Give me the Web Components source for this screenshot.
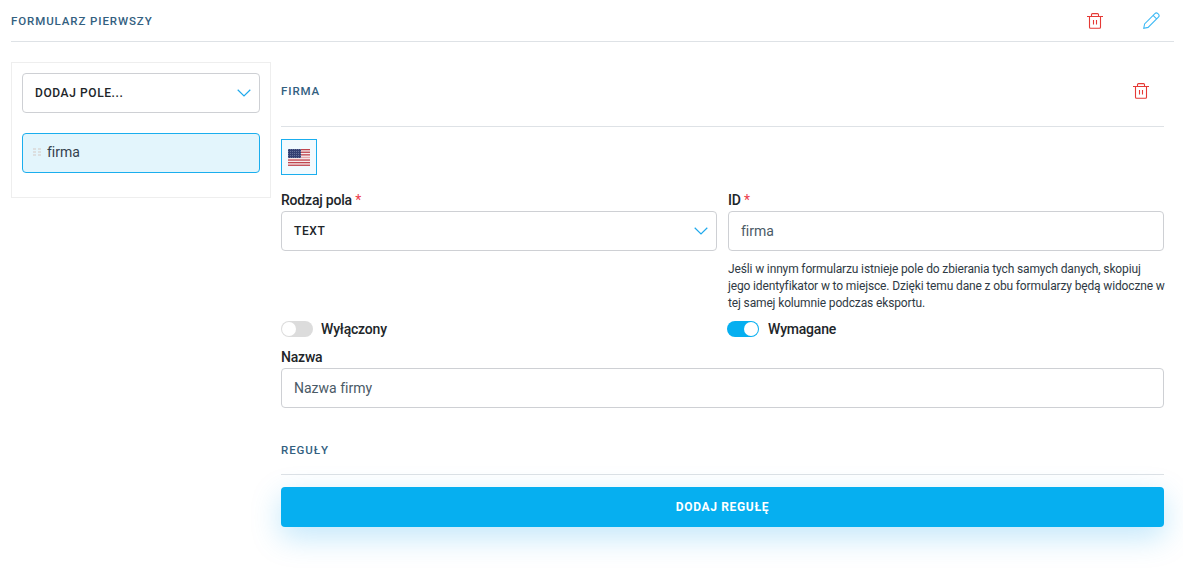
<!DOCTYPE html>
<html lang="pl">
<head>
<meta charset="utf-8">
<title>Formularz</title>
<style>
  html, body { margin: 0; background: #fff; }
  body { font-family: Roboto, "Liberation Sans", sans-serif; color: #212529; font-variant-ligatures: none; }
</style>
</head>
<body>
<form-page></form-page>

<script>
const trashIcon = `<svg width="16" height="16" viewBox="0 0 16 16" fill="none" stroke="#e53935" stroke-width="1.1">
  <path d="M0 3.5h16M2.5 3.5v10.8a1 1 0 0 0 1 1h9a1 1 0 0 0 1-1V3.5M4.5 3.5V1.6a1 1 0 0 1 1-1h5a1 1 0 0 1 1 1v1.9M6.5 7v4.5M9.5 7v4.5"/>
</svg>`;

const pencilIcon = `<svg width="17" height="17" viewBox="0 0 18 18" fill="none" stroke="#3db9f5" stroke-width="1.15">
  <path d="M.8 17.2l.9-4.6L12.6 1.7a2.2 2.2 0 0 1 3.1 0l.6.6a2.2 2.2 0 0 1 0 3.1L5.4 16.3zM10.7 3.6l3.7 3.7"/>
</svg>`;

const chevronIcon = `<svg width="14" height="8" viewBox="0 0 14 8" fill="none" stroke="#1fa9ec" stroke-width="1.2"><path d="M.7.8L7 7l6.3-6.2"/></svg>`;

// custom element FormHeading
class FormHeading extends HTMLElement {
  constructor() {
    super();
    this.attachShadow({ mode: "open" });
    this.shadowRoot.innerHTML = `
      <style>
        :host {
          display: flex;
          justify-content: space-between;
          align-items: center;
          border-bottom: 1px solid #dee2e6;
          color: #33607f;
          font-size: 11.5px;
          font-weight: 500;
          letter-spacing: .9px;
        }
        .actions { display: flex; align-items: center; gap: 10px; }
      </style>
      <span><slot></slot></span>
      <div class="actions"><slot name="actions"></slot></div>
    `;
  }
}
customElements.define("form-heading", FormHeading);

// custom element IconButton
class IconButton extends HTMLElement {
  constructor() {
    super();
    this.attachShadow({ mode: "open" });
    this.shadowRoot.innerHTML = `
      <style>
        :host { display: flex; align-items: center; justify-content: center; width: 46px; height: 40px; }
        svg { display: block; }
      </style>
      ${this.getAttribute("icon") === "pencil" ? pencilIcon : trashIcon}
    `;
  }
}
customElements.define("icon-button", IconButton);

// custom element SelectBox
class SelectBox extends HTMLElement {
  constructor() {
    super();
    this.attachShadow({ mode: "open" });
    this.shadowRoot.innerHTML = `
      <style>
        :host {
          display: flex;
          justify-content: space-between;
          align-items: center;
          box-sizing: border-box;
          height: 40px;
          padding: 0 15px 1px 12px;
          border: 1px solid #ced0d4;
          border-radius: 4px;
          background: #fff;
          color: #212529;
          font-size: 12px;
          font-weight: 500;
          letter-spacing: .6px;
        }
        svg { display: block; margin-right: -7px; }
      </style>
      <span><slot></slot></span>
      ${chevronIcon}
    `;
  }
}
customElements.define("select-box", SelectBox);

// custom element FieldItem
class FieldItem extends HTMLElement {
  constructor() {
    super();
    this.attachShadow({ mode: "open" });
    this.shadowRoot.innerHTML = `
      <style>
        :host {
          display: flex;
          align-items: center;
          gap: 6px;
          box-sizing: border-box;
          height: 40px;
          padding: 0 10px 2px;
          border: 1px solid #1aaeee;
          border-radius: 4px;
          background: #e3f5fc;
          color: #33404d;
          font-size: 14px;
        }
        .grip {
          display: grid;
          grid-template-columns: 3px 3px;
          gap: 1px 2px;
        }
        .grip i { width: 3px; height: 2px; background: #dcdfe0; }
      </style>
      <span class="grip"><i></i><i></i><i></i><i></i><i></i><i></i></span>
      <span><slot></slot></span>
    `;
  }
}
customElements.define("field-item", FieldItem);

// custom element FieldSidebar
class FieldSidebar extends HTMLElement {
  constructor() {
    super();
    this.attachShadow({ mode: "open" });
    this.shadowRoot.innerHTML = `
      <style>
        :host {
          display: flex;
          flex-direction: column;
          gap: 20px;
          box-sizing: border-box;
          width: 260px;
          height: 136px;
          padding: 10px;
          border: 1px solid #eeeeee;
        }
      </style>
      <slot></slot>
    `;
  }
}
customElements.define("field-sidebar", FieldSidebar);

// custom element FlagTab
class FlagTab extends HTMLElement {
  constructor() {
    super();
    this.attachShadow({ mode: "open" });
    let stripes = "";
    for (let i = 0; i < 7; i++) {
      stripes += `<rect x="0" y="${i * 2.6}" width="22" height="1.3" fill="${i === 3 ? "#e6a9ae" : "#c0454f"}"/>`;
    }
    this.shadowRoot.innerHTML = `
      <style>
        :host {
          display: flex;
          align-items: center;
          justify-content: center;
          box-sizing: border-box;
          width: 36px;
          height: 36px;
          border: 1px solid #1aaeee;
          background: #f2fafe;
        }
        svg { display: block; }
      </style>
      <svg width="22" height="17" viewBox="0 0 22 17">
        <defs>
          <pattern id="stars" width="2" height="2" patternUnits="userSpaceOnUse">
            <rect width="2" height="2" fill="#333f72"/>
            <rect width="1" height="1" fill="#65709a"/>
          </pattern>
        </defs>
        <rect width="22" height="17" fill="#f6eeee"/>
        ${stripes}
        <rect width="13" height="9" fill="url(#stars)"/>
      </svg>
    `;
  }
}
customElements.define("flag-tab", FlagTab);

// custom element FormField
class FormField extends HTMLElement {
  constructor() {
    super();
    this.attachShadow({ mode: "open" });
    const required = this.hasAttribute("required");
    this.shadowRoot.innerHTML = `
      <style>
        :host { display: block; }
        label {
          display: block;
          height: 21px;
          line-height: 20px;
          color: #212529;
          font-size: 14px;
          font-weight: 500;
          letter-spacing: -.2px;
        }
        .star { color: #ec3d4c; font-weight: 400; }
      </style>
      <label>${this.getAttribute("label")}${required ? ' <span class="star">*</span>' : ""}</label>
      <slot></slot>
    `;
  }
}
customElements.define("form-field", FormField);

// custom element TextBox
class TextBox extends HTMLElement {
  constructor() {
    super();
    this.attachShadow({ mode: "open" });
    this.shadowRoot.innerHTML = `
      <style>
        :host {
          display: flex;
          align-items: center;
          box-sizing: border-box;
          height: 40px;
          padding: 0 12px;
          border: 1px solid #ced0d4;
          border-radius: 4px;
          color: #4a5a66;
          font-size: 14px;
          background: #fff;
        }
      </style>
      <slot></slot>
    `;
  }
}
customElements.define("text-box", TextBox);

// custom element ToggleSwitch
class ToggleSwitch extends HTMLElement {
  constructor() {
    super();
    this.attachShadow({ mode: "open" });
    this.shadowRoot.innerHTML = `
      <style>
        :host {
          display: flex;
          align-items: center;
          gap: 8px;
          height: 18px;
          color: #212529;
          font-size: 14px;
          font-weight: 500;
          letter-spacing: -.2px;
        }
        :host([on]) { gap: 9px; }
        .track {
          display: flex;
          align-items: center;
          box-sizing: border-box;
          width: 32px;
          height: 16px;
          padding: 1px;
          border-radius: 8px;
          background: #dcdcdc;
        }
        .knob { width: 14px; height: 14px; border-radius: 50%; background: #fff; }
        :host([on]) .track { background: #06aff0; justify-content: flex-end; }
      </style>
      <span class="track"><span class="knob"></span></span>
      <span><slot></slot></span>
    `;
  }
}
customElements.define("toggle-switch", ToggleSwitch);

// custom element PrimaryButton
class PrimaryButton extends HTMLElement {
  constructor() {
    super();
    this.attachShadow({ mode: "open" });
    this.shadowRoot.innerHTML = `
      <style>
        :host {
          display: flex;
          align-items: center;
          justify-content: center;
          height: 40px;
          border-radius: 4px;
          background: #06aff0;
          box-shadow: 0 10px 30px rgba(6, 160, 240, .25);
          color: #fff;
          font-size: 12px;
          font-weight: 700;
          letter-spacing: .65px;
        }
      </style>
      <slot></slot>
    `;
  }
}
customElements.define("primary-button", PrimaryButton);

// custom element FormPage
class FormPage extends HTMLElement {
  constructor() {
    super();
    this.attachShadow({ mode: "open" });
    this.shadowRoot.innerHTML = `
      <style>
        :host {
          display: block;
          padding: 0 9px 0 11px;
          height: 575px;
          box-sizing: border-box;
          overflow: hidden;
        }
        .top { height: 41px; }
        .layout { display: flex; gap: 10px; margin-top: 20px; padding-right: 1px; }
        .main { flex: 1; min-width: 0; padding-right: 9px; }
        .section { height: 57px; padding-bottom: 7px; margin-bottom: 12px; }
        .rules { height: 26px; padding-bottom: 11px; margin: 29px 0 12px; }
        .cols { display: grid; grid-template-columns: repeat(2, minmax(0, 1fr)); column-gap: 11px; margin-top: 15px; }
        .hint {
          margin: 10px 0 0;
          font-size: 12px;
          line-height: 17px;
          letter-spacing: -.14px;
          white-space: nowrap;
          color: #2f3a44;
        }
        .toggles { margin: 8px 0 0 -1px; }
        .left-toggle { margin-top: 69px; }
        .name { margin-top: 9px; }
      </style>
      <form-heading class="top">
        FORMULARZ PIERWSZY
        <icon-button slot="actions" icon="trash"></icon-button>
        <icon-button slot="actions" icon="pencil"></icon-button>
      </form-heading>
      <div class="layout">
        <field-sidebar>
          <select-box>DODAJ POLE...</select-box>
          <field-item>firma</field-item>
        </field-sidebar>
        <div class="main">
          <form-heading class="section">
            FIRMA
            <icon-button slot="actions" icon="trash"></icon-button>
          </form-heading>
          <flag-tab></flag-tab>
          <div class="cols">
            <div>
              <form-field label="Rodzaj pola" required><select-box>TEXT</select-box></form-field>
              <toggle-switch class="left-toggle">Wyłączony</toggle-switch>
            </div>
            <div>
              <form-field label="ID" required><text-box>firma</text-box></form-field>
              <p class="hint">Jeśli w innym formularzu istnieje pole do zbierania tych samych danych, skopiuj<br>jego identyfikator w to miejsce. Dzięki temu dane z obu formularzy będą widoczne w<br>tej samej kolumnie podczas eksportu.</p>
              <toggle-switch class="toggles" on>Wymagane</toggle-switch>
            </div>
          </div>
          <form-field class="name" label="Nazwa"><text-box>Nazwa firmy</text-box></form-field>
          <form-heading class="rules">REGUŁY</form-heading>
          <primary-button>DODAJ REGUŁĘ</primary-button>
        </div>
      </div>
    `;
  }
}
customElements.define("form-page", FormPage);
</script>
</body>
</html>
